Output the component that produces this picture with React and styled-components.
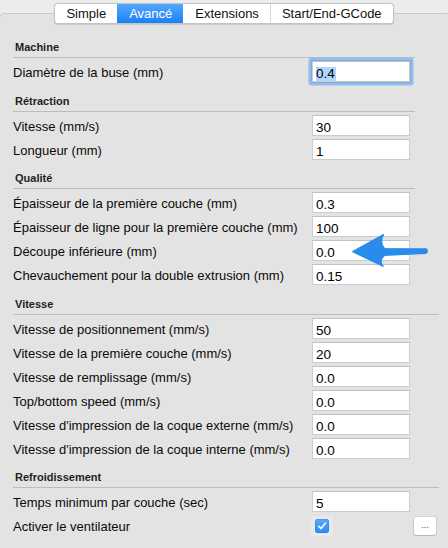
import React from "react";
import styled, { createGlobalStyle } from "styled-components";

const GlobalStyle = createGlobalStyle`
  html, body { margin: 0; padding: 0; background: #ececec; overflow: hidden; }
  body { font-family: "Liberation Sans", Arial, sans-serif; color: #000; }
`;

const Page = styled.div`
  position: relative;
  width: 448px;
  height: 548px;
  padding-top: 3px;
  box-sizing: border-box;
  overflow: hidden;
`;

const TabBar = styled.div`
  position: relative;
  z-index: 1;
  display: flex;
  width: max-content;
  margin: 0 auto;
  height: 21px;
  box-sizing: border-box;
  border: 1px solid #c3c3c3;
  border-radius: 4px;
  background: #fff;
  overflow: hidden;
  box-shadow: 0 0.5px 1px rgba(0, 0, 0, 0.12);
`;

const Tab = styled.div`
  padding: 0 11px;
  font-size: 13px;
  line-height: 19px;
  color: ${(p) => (p.$active ? "#fff" : "#111")};
  background: ${(p) => (p.$active ? "linear-gradient(#55a8fc, #1b80f6)" : "transparent")};
  border-left: 1px solid ${(p) => (p.$active || p.$afterActive ? "transparent" : "#d6d6d6")};
  &:first-child { border-left: none; }
  white-space: nowrap;
`;

const Panel = styled.div`
  margin: -11px -3px 0 -1px;
  min-height: 560px;
  border: 1px solid #c9c9c9;
  border-radius: 5px;
  background: #e3e3e3;
  padding: 27px 0 0 13px;
  box-sizing: border-box;
`;

const Sections = styled.div`
  display: flex;
  flex-direction: column;
  gap: 12.5px;
`;

const SectionHeader = styled.div`
  width: ${(p) => (p.$wide ? "424px" : "400px")};
  padding: 0 0 3px 2px;
  font-size: 11px;
  font-weight: bold;
  line-height: 13px;
  color: #1e1e1e;
  border-bottom: 1px solid #bdbdbd;
`;

const Rows = styled.div`
  display: flex;
  flex-direction: column;
  gap: 3px;
  padding-top: 3px;
`;

const Row = styled.div`
  display: grid;
  grid-template-columns: 299px 98px 27px;
  height: 21px;
  align-items: center;
`;

const Label = styled.div`
  font-size: 13px;
  padding-top: 2px;
  line-height: 19px;
  white-space: nowrap;
  color: #0a0a0a;
`;

const Field = styled.div`
  width: 98px;
  height: 21px;
  box-sizing: border-box;
  background: #fff;
  border: 1px solid #cdcdcd;
  border-top-color: #c2c2c2;
  padding: 5px 3px 0 3px;
  font-size: 13.5px;
  line-height: 14px;
  color: #000;
  white-space: nowrap;
  overflow: hidden;
  border-radius: ${(p) => (p.$focused ? "1px" : "0")};
  box-shadow: ${(p) =>
    p.$focused ? "0 0 0 1px #7aa9e6, 0 0 0 3.5px #93bdee" : "none"};
`;

const Selected = styled.span`
  display: inline-block;
  background: #b3d5fd;
  height: 14px;
  line-height: 14px;
  padding-right: 1px;
`;

const CheckCell = styled.div`
  width: 22px;
  height: 20px;
  margin-left: -1px;
  display: flex;
  align-items: center;
  justify-content: center;
  background: #e9e9e9;
`;

const CheckBox = styled.div`
  width: 14px;
  height: 14px;
  border-radius: 3px;
  background: linear-gradient(#56aaff, #2b8cf7);
  box-shadow: inset 0 0 0 0.5px rgba(0, 60, 160, 0.35);
  display: flex;
  align-items: center;
  justify-content: center;
`;

const DotsButton = styled.div`
  justify-self: end;
  width: 24px;
  height: 20px;
  margin-top: 1px;
  box-sizing: border-box;
  border: 1px solid #cacaca;
  border-top-color: #d6d6d6;
  border-bottom-color: #b8b8b8;
  border-radius: 4px;
  background: #fff;
  font-size: 9px;
  line-height: 17px;
  text-align: center;
  color: #444;
`;

const Arrow = styled.svg`
  position: absolute;
  left: 340px;
  top: 230px;
  width: 100px;
  height: 45px;
  pointer-events: none;
`;

const sections = [
  {
    title: "Machine",
    rows: [{ label: "Diamètre de la buse (mm)", value: "0.4", focused: true }],
  },
  {
    title: "Rétraction",
    rows: [
      { label: "Vitesse (mm/s)", value: "30" },
      { label: "Longueur (mm)", value: "1" },
    ],
  },
  {
    title: "Qualité",
    rows: [
      { label: "Épaisseur de la première couche (mm)", value: "0.3" },
      { label: "Épaisseur de ligne pour la première couche (mm)", value: "100" },
      { label: "Découpe inférieure (mm)", value: "0.0" },
      { label: "Chevauchement pour la double extrusion (mm)", value: "0.15" },
    ],
  },
  {
    title: "Vitesse",
    wide: true,
    rows: [
      { label: "Vitesse de positionnement (mm/s)", value: "50" },
      { label: "Vitesse de la première couche (mm/s)", value: "20" },
      { label: "Vitesse de remplissage (mm/s)", value: "0.0" },
      { label: "Top/bottom speed (mm/s)", value: "0.0" },
      { label: "Vitesse d'impression de la coque externe (mm/s)", value: "0.0" },
      { label: "Vitesse d'impression de la coque interne (mm/s)", value: "0.0" },
    ],
  },
  {
    title: "Refroidissement",
    wide: true,
    rows: [
      { label: "Temps minimum par couche (sec)", value: "5" },
      { label: "Activer le ventilateur", check: true },
    ],
  },
];

const tabs = ["Simple", "Avancé", "Extensions", "Start/End-GCode"];

export default function App() {
  return (
    <>
      <GlobalStyle />
      <Page>
        <TabBar>
          {tabs.map((t, i) => (
            <Tab key={t} $active={i === 1} $afterActive={i === 2}>
              {t}
            </Tab>
          ))}
        </TabBar>
        <Panel>
          <Sections>
            {sections.map((s) => (
              <div key={s.title}>
                <SectionHeader $wide={s.wide}>{s.title}</SectionHeader>
                <Rows>
                  {s.rows.map((r) => (
                    <Row key={r.label}>
                      <Label>{r.label}</Label>
                      {r.check ? (
                        <>
                          <CheckCell>
                            <CheckBox>
                              <svg width="10" height="10" viewBox="0 0 10 10">
                                <path
                                  d="M1.8 5.3 L4 7.6 L8.4 2.2"
                                  fill="none"
                                  stroke="#fff"
                                  strokeWidth="1.6"
                                  strokeLinecap="round"
                                  strokeLinejoin="round"
                                />
                              </svg>
                            </CheckBox>
                          </CheckCell>
                          <DotsButton>...</DotsButton>
                        </>
                      ) : (
                        <Field $focused={r.focused}>
                          {r.focused ? <Selected>{r.value}</Selected> : r.value}
                        </Field>
                      )}
                    </Row>
                  ))}
                </Rows>
              </div>
            ))}
          </Sections>
        </Panel>
        <Arrow viewBox="0 0 100 45">
          <path
            d="M12.8 21.7 L43.5 4.5 Q39 12.5 44.5 18.6 L86 18.9 Q88.6 21 86 23.2 L44.5 25.2 Q38.5 30.5 43 36.2 Z"
            fill="#2a8cea"
            stroke="#2a8cea"
            strokeWidth="1.4"
            strokeLinejoin="round"
          />
        </Arrow>
      </Page>
    </>
  );
}
